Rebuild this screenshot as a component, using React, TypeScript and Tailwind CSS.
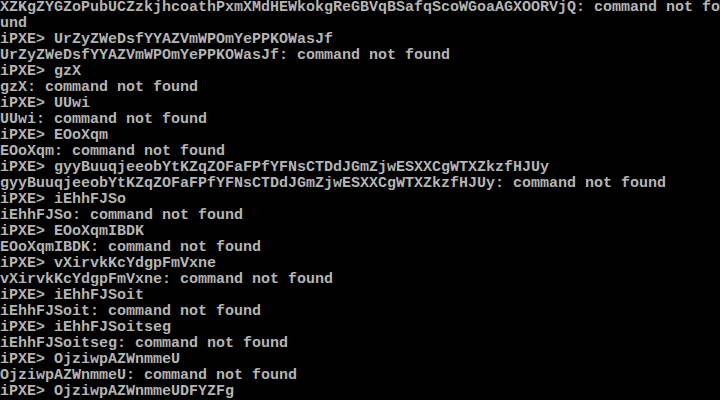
const lines = [
  "XZKgZYGZoPubUCZzkjhcoathPxmXMdHEWkokgReGBVqBSafqScoWGoaAGXOORVjQ: command not fo",
  "und",
  "iPXE> UrZyZWeDsfYYAZVmWPOmYePPKOWasJf",
  "UrZyZWeDsfYYAZVmWPOmYePPKOWasJf: command not found",
  "iPXE> gzX",
  "gzX: command not found",
  "iPXE> UUwi",
  "UUwi: command not found",
  "iPXE> EOoXqm",
  "EOoXqm: command not found",
  "iPXE> gyyBuuqjeeobYtKZqZOFaFPfYFNsCTDdJGmZjwESXXCgWTXZkzfHJUy",
  "gyyBuuqjeeobYtKZqZOFaFPfYFNsCTDdJGmZjwESXXCgWTXZkzfHJUy: command not found",
  "iPXE> iEhhFJSo",
  "iEhhFJSo: command not found",
  "iPXE> EOoXqmIBDK",
  "EOoXqmIBDK: command not found",
  "iPXE> vXirvkKcYdgpFmVxne",
  "vXirvkKcYdgpFmVxne: command not found",
  "iPXE> iEhhFJSoit",
  "iEhhFJSoit: command not found",
  "iPXE> iEhhFJSoitseg",
  "iEhhFJSoitseg: command not found",
  "iPXE> OjziwpAZWnmmeU",
  "OjziwpAZWnmmeU: command not found",
  "iPXE> OjziwpAZWnmmeUDFYZFg",
];

export default function App() {
  return (
    <div className="w-[720px] h-[400px] bg-black overflow-hidden">
      <div className="flex flex-col font-['Liberation_Mono',monospace] text-[15px] leading-[16px] text-[#b4b4b4] font-bold">
        {lines.map((line, i) => (
          <div key={i} className="h-4 whitespace-pre">{line}</div>
        ))}
      </div>
    </div>
  );
}
